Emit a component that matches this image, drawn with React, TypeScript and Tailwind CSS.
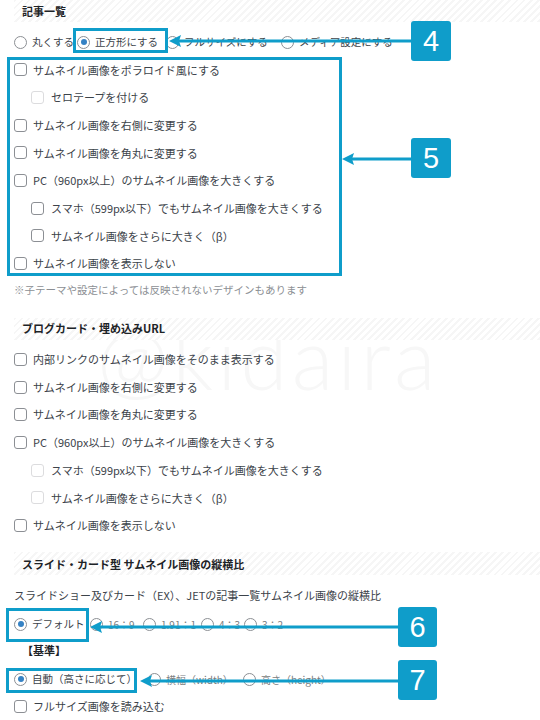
import React from 'react';

const BLUE = 'bg-[#0f9dca]';

const Check: React.FC<{ faded?: boolean }> = ({ faded }) => (
  <span
    className={
      faded
        ? 'block w-[13px] h-[13px] shrink-0 rounded-[3px] border border-[#dcdcde] bg-white'
        : 'block w-[13px] h-[13px] shrink-0 rounded-[3px] border border-[#8c8f94] bg-white'
    }
  />
);

const Radio: React.FC<{ checked?: boolean }> = ({ checked }) => (
  <span className="flex w-[13px] h-[13px] shrink-0 items-center justify-center rounded-full border border-[#8c8f94] bg-white">
    {checked && <span className="block w-[6px] h-[6px] rounded-full bg-[#3582c4]" />}
  </span>
);

const CheckRow: React.FC<{ label: string; indent?: boolean; faded?: boolean }> = ({ label, indent, faded }) => (
  <div className={indent ? 'flex h-[27.7px] items-center gap-[7px] pl-[17px]' : 'flex h-[27.7px] items-center gap-[6px]'}>
    <Check faded={faded} />
    <span className="whitespace-nowrap">{label}</span>
  </div>
);

const Header: React.FC<{ children: React.ReactNode; className?: string }> = ({ children, className }) => (
  <div
    className={`flex items-center pl-[8px] font-bold text-[#1d2327] bg-[repeating-linear-gradient(135deg,#f6f6f6_0px,#f6f6f6_2px,#ffffff_2px,#ffffff_5px)] ${className ?? ''}`}
  >
    {children}
  </div>
);

type Opt = { label: string; w?: string; checked?: boolean; dim?: boolean };

const RadioRow: React.FC<{ opts: Opt[]; className: string }> = ({ opts, className }) => (
  <div className={`flex items-center ${className}`}>
    {opts.map((o) => (
      <div key={o.label} className={`flex shrink-0 items-center gap-[5px] ${o.w ?? ''}`}>
        <Radio checked={o.checked} />
        <span className={o.dim ? 'whitespace-nowrap text-[10px] text-[#7a7d80]' : 'whitespace-nowrap'}>{o.label}</span>
      </div>
    ))}
  </div>
);

// annotation overlays
const Frame: React.FC<{ className: string }> = ({ className }) => (
  <div className={`absolute border-[3px] border-[#0f9dca] ${className}`} />
);

const Arrow: React.FC<{ className: string; width: number }> = ({ className, width }) => (
  <svg className={`absolute ${className}`} width={width} height={14} viewBox={`0 0 ${width} 14`}>
    <rect x={8} y={5.5} width={width - 8} height={3} fill="#0f9dca" />
    <polygon points="0,7 12,1 10,7 12,13" fill="#0f9dca" />
  </svg>
);

const Tag: React.FC<{ n: string; className: string }> = ({ n, className }) => (
  <div
    className={`absolute flex items-center justify-center rounded-[3px] ${BLUE} font-['Liberation_Sans',Arial,sans-serif] text-[29px] leading-none text-white ${className}`}
  >
    {n}
  </div>
);

export default function App() {
  return (
    <div className="relative isolate h-[720px] w-[540px] overflow-hidden bg-white font-['Noto_Sans_CJK_JP','Noto_Sans',sans-serif] text-[11px] text-[#3c434a]">
      <div className="absolute left-[97px] top-[314px] -z-10 select-none font-['Lato',sans-serif] text-[86px] font-light leading-none tracking-[4px] text-[#f7f7f7]">
        @kidaira
      </div>

      <div className="pl-[14px]">
        <Header className="h-[22px]">記事一覧</Header>
        <RadioRow
          className="mt-[6px] h-[28px] text-[10.5px]"
          opts={[
            { label: '丸くする', w: 'w-[63px]' },
            { label: '正方形にする', w: 'w-[89px]', checked: true },
            { label: 'フルサイズにする', w: 'w-[115px]' },
            { label: 'メディア設定にする' },
          ]}
        />
        <div>
          <CheckRow label="サムネイル画像をポラロイド風にする" />
          <CheckRow label="セロテープを付ける" indent faded />
          <CheckRow label="サムネイル画像を右側に変更する" />
          <CheckRow label="サムネイル画像を角丸に変更する" />
          <CheckRow label="PC（960px以上）のサムネイル画像を大きくする" />
          <CheckRow label="スマホ（599px以下）でもサムネイル画像を大きくする" indent />
          <CheckRow label="サムネイル画像をさらに大きく（β）" indent />
          <CheckRow label="サムネイル画像を表示しない" />
        </div>
        <div className="flex h-[24px] items-center text-[10.5px] text-[#8c8f94]">
          ※子テーマや設定によっては反映されないデザインもあります
        </div>

        <Header className="mt-[16px] h-[22px]">ブログカード・埋め込みURL</Header>
        <div className="mt-[6px]">
          <CheckRow label="内部リンクのサムネイル画像をそのまま表示する" />
          <CheckRow label="サムネイル画像を右側に変更する" />
          <CheckRow label="サムネイル画像を角丸に変更する" />
          <CheckRow label="PC（960px以上）のサムネイル画像を大きくする" />
          <CheckRow label="スマホ（599px以下）でもサムネイル画像を大きくする" indent faded />
          <CheckRow label="サムネイル画像をさらに大きく（β）" indent faded />
          <CheckRow label="サムネイル画像を表示しない" />
        </div>

        <Header className="mt-[13px] h-[23px]">スライド・カード型 サムネイル画像の縦横比</Header>
        <div className="mt-[6px] flex h-[28px] items-center">
          スライドショー及びカード（EX）、JETの記事一覧サムネイル画像の縦横比
        </div>
        <RadioRow
          className="h-[30px] text-[10.5px]"
          opts={[
            { label: 'デフォルト', w: 'w-[76px]', checked: true },
            { label: '16：9', w: 'w-[53px]', dim: true },
            { label: '1.91：1', w: 'w-[58px]', dim: true },
            { label: '4：3', w: 'w-[43px]', dim: true },
            { label: '3：2', dim: true },
          ]}
        />
        <div className="flex h-[22px] items-center pl-[8px] font-bold text-[#1d2327]">【基準】</div>
        <RadioRow
          className="h-[36px] text-[10.5px]"
          opts={[
            { label: '自動（高さに応じて）', w: 'w-[134px]', checked: true },
            { label: '横幅（width）', w: 'w-[95px]', dim: true },
            { label: '高さ（height）', dim: true },
          ]}
        />
        <div className="flex h-[18px] items-center gap-[6px]">
          <Check />
          <span>フルサイズ画像を読み込む</span>
        </div>
      </div>

      {/* annotations */}
      <Frame className="left-[73px] top-[28px] h-[25px] w-[95px]" />
      <Arrow className="left-[169px] top-[34px]" width={243} />
      <Tag n="4" className="left-[411px] top-[21px] h-[40px] w-[40px]" />

      <Frame className="left-[7px] top-[57px] h-[219px] w-[335px]" />
      <Arrow className="left-[342px] top-[152px]" width={70} />
      <Tag n="5" className="left-[411px] top-[138px] h-[40px] w-[40px]" />

      <Frame className="left-[6px] top-[608px] h-[34px] w-[83px]" />
      <Arrow className="left-[90px] top-[620px]" width={309} />
      <Tag n="6" className="left-[398px] top-[607px] h-[40px] w-[39px]" />

      <Frame className="left-[6px] top-[668px] h-[25px] w-[131px]" />
      <Arrow className="left-[140px] top-[674px]" width={259} />
      <Tag n="7" className="left-[398px] top-[660px] h-[40px] w-[39px]" />
    </div>
  );
}
